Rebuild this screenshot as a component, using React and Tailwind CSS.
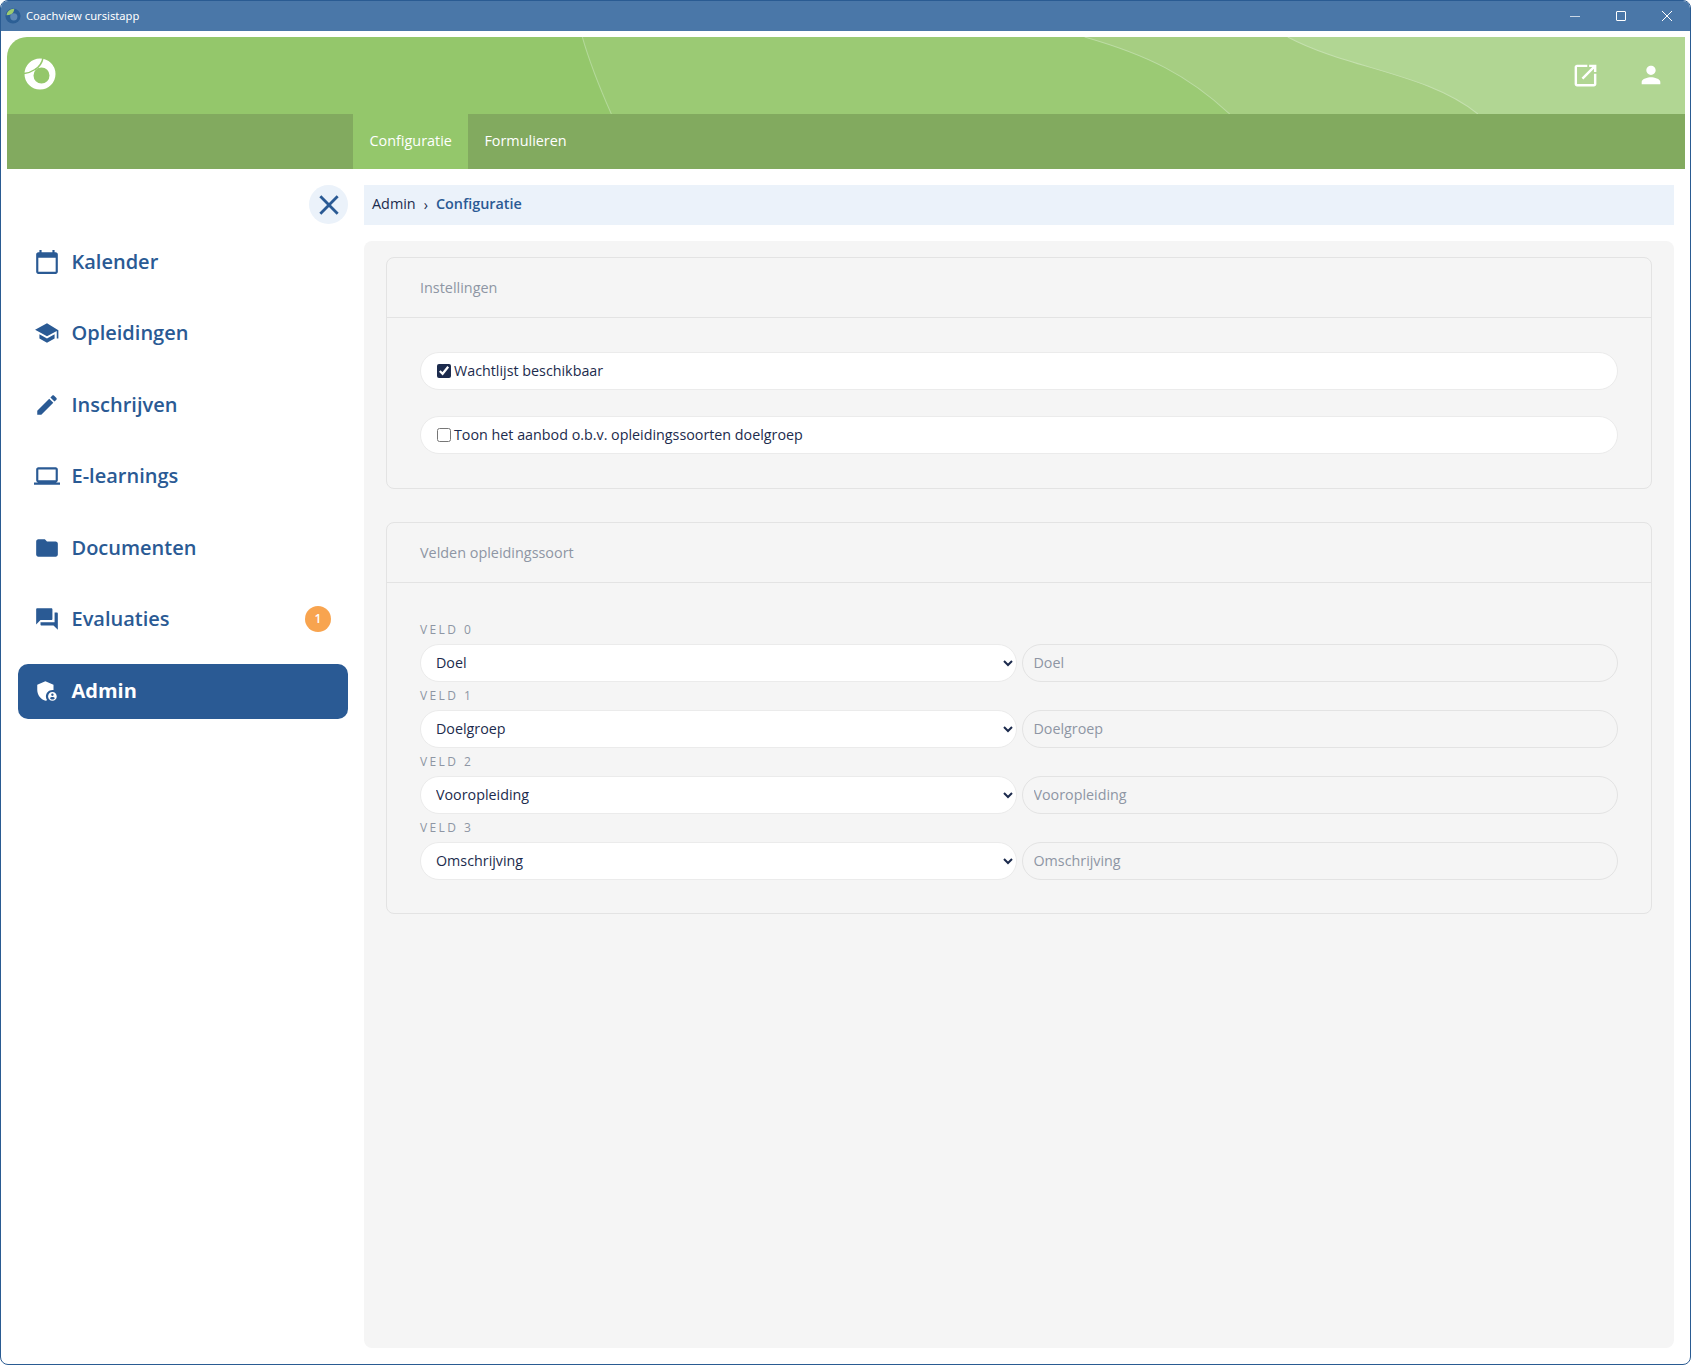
import React from 'react';

const menuItems = [
  { label: 'Kalender', d: 'M20 3h-1V1h-2v2H7V1H5v2H4c-1.1 0-2 .9-2 2v16c0 1.1.9 2 2 2h16c1.1 0 2-.9 2-2V5c0-1.1-.9-2-2-2zm0 18H4V8h16v13z' },
  { label: 'Opleidingen', d: 'M5 13.18v4L12 21l7-3.82v-4L12 17l-7-3.82zM12 3L1 9l11 6 9-4.91V17h1.5V9.5L12 3z' },
  { label: 'Inschrijven', d: 'M3 17.25V21h3.75L17.81 9.94l-3.75-3.75L3 17.25zM20.71 7.04c.39-.39.39-1.02 0-1.41l-2.34-2.34c-.39-.39-1.02-.39-1.41 0l-1.83 1.83 3.75 3.75 1.83-1.83z' },
  { label: 'E-learnings', d: 'M20 18c1.1 0 1.99-.9 1.99-2L22 6c0-1.1-.9-2-2-2H4c-1.1 0-2 .9-2 2v10c0 1.1.9 2 2 2H0v2h24v-2h-4zM4 6h16v10H4V6z' },
  { label: 'Documenten', d: 'M10 4H4c-1.1 0-1.99.9-1.99 2L2 18c0 1.1.9 2 2 2h16c1.1 0 2-.9 2-2V8c0-1.1-.9-2-2-2h-8l-2-2z' },
  { label: 'Evaluaties', badge: '1', d: 'M21 6h-2v9H6v2c0 .55.45 1 1 1h11l4 4V7c0-.55-.45-1-1-1zm-4 6V3c0-.55-.45-1-1-1H3c-.55 0-1 .45-1 1v14l4-4h10c.55 0 1-.45 1-1z' },
];

const velden = [
  { label: 'VELD 0', value: 'Doel' },
  { label: 'VELD 1', value: 'Doelgroep' },
  { label: 'VELD 2', value: 'Vooropleiding' },
  { label: 'VELD 3', value: 'Omschrijving' },
];

const Icon = ({ d, className }) => (
  <svg viewBox="0 0 24 24" className={className} fill="currentColor">
    <path d={d} />
  </svg>
);

const Card = ({ title, children }) => (
  <div className="rounded-lg border border-[#e3e3e3]">
    <div className="flex h-[60px] items-center border-b border-[#e3e3e3] px-[33px] text-[14.400px] text-[#8e96a4]">{title}</div>
    {children}
  </div>
);

const CheckRow = ({ label, checked }) => (
  <label className="flex h-[38px] items-center gap-[3px] rounded-full border border-[#ebebeb] bg-white pl-[16px] text-[14.300px] text-[#1c2b4d]">
    <input type="checkbox" defaultChecked={checked} className="m-0 h-[14px] w-[14px] accent-[#1c2b4d]" />
    <span>{label}</span>
  </label>
);

export default function App() {
  return (
    <div className="flex h-screen w-screen flex-col overflow-hidden rounded-lg border border-[#2a5b92] bg-white font-['Open_Sans',sans-serif]">
      {/* Window title bar */}
      <div className="flex h-[30px] shrink-0 items-center bg-[#4a77a8] pl-[4px] text-white">
        <svg viewBox="0 0 20 20" className="h-[16px] w-[16px]">
          <circle cx="10" cy="10" r="9.500" fill="#2c5f95" />
          <circle cx="11" cy="11" r="4.500" fill="#5d88b5" />
          <path d="M2 9C2 4.500 6 1 11.500 .8c.3 4-3 8-9.500 8.200z" fill="#9ccb70" />
        </svg>
        <span className="ml-[5px] font-['Noto_Sans',sans-serif] text-[11.200px]">Coachview cursistapp</span>
        <div className="ml-auto flex items-center">
          <div className="flex w-[46px] justify-center">
            <div className="h-px w-[10px] bg-[#c9d6e5]" />
          </div>
          <div className="flex w-[46px] justify-center">
            <div className="h-[10px] w-[10px] rounded-[1px] border border-white" />
          </div>
          <div className="flex w-[46px] justify-center">
            <svg viewBox="0 0 12 12" className="h-[12px] w-[12px]" stroke="white" strokeWidth="1">
              <path d="M1 1l10 10M11 1L1 11" />
            </svg>
          </div>
        </div>
      </div>

      <div className="flex min-h-0 flex-1 flex-col pt-[6px] pl-[6px] pr-[5px]">
        {/* Green header */}
        <div className="relative flex h-[77px] shrink-0 items-center overflow-hidden rounded-tl-[20px] bg-[#94c76b] pl-[17px] pr-[20px]">
          <svg viewBox="0 0 1677 77" preserveAspectRatio="none" className="absolute inset-0 h-full w-full" fill="none">
            <path d="M575 0C583 28 592 50 604 77H1677V0Z" fill="#9bca74" />
            <path d="M1077 0C1140 18 1180 38 1222 77H1677V0Z" fill="#a6ce82" />
            <path d="M1280 0C1340 32 1420 36 1470 77H1677V0Z" fill="#b1d693" />
            <path d="M575 0C583 28 592 50 604 77" stroke="#b4d99a" />
            <path d="M1077 0C1140 18 1180 38 1222 77" stroke="#bcdca4" />
            <path d="M1280 0C1340 32 1420 36 1470 77" stroke="#c4e0ae" />
          </svg>
          <svg viewBox="0 0 32 32" className="relative mb-[4px] h-[32px] w-[32px]">
            <path fill="white" fillRule="evenodd" d="M16 .5a15.500 15.500 0 1 0 0 31 15.500 15.500 0 0 0 0-31zM17.500 9.500a8 8 0 1 1 0 16 8 8 0 0 1 0-16z" />
            <path d="M19 0C18 5 15 9 11 11.500C8 13.500 4 15 0 15.500" fill="none" stroke="#94c76b" strokeWidth="1.500" />
          </svg>
          <div className="relative mb-[1px] ml-auto flex items-center gap-[37px] text-white">
            <Icon className="h-[29px] w-[29px]" d="M19 19H5V5h8.500V3H5c-1.110 0-2 .9-2 2v14c0 1.100.89 2 2 2h14c1.100 0 2-.9 2-2v-8.500h-2V19zM15 3v2h2.590l-8.830 8.830 1.410 1.410L19 6.410V9h2V3h-6z" />
            <Icon className="h-[28px] w-[28px]" d="M12 12c2.210 0 4-1.790 4-4s-1.790-4-4-4-4 1.790-4 4 1.790 4 4 4zm0 2c-2.670 0-8 1.340-8 4v2h16v-2c0-2.660-5.330-4-8-4z" />
          </div>
        </div>

        {/* Tabs */}
        <div className="flex h-[55px] shrink-0 bg-[#82aa5f] pl-[346px] pb-[2px] text-[14.400px] text-white">
          <div className="-mb-[2px] flex items-center bg-[#94c76b] px-[16.500px] pb-[2px]">Configuratie</div>
          <div className="flex items-center px-[16px]">Formulieren</div>
        </div>

        <div className="flex min-h-0 flex-1">
          {/* Sidebar */}
          <aside className="flex w-[357px] shrink-0 flex-col pt-[16px] pr-[16px] pl-[11px]">
            <div className="mb-[10px] flex h-[39px] w-[39px] items-center justify-center self-end rounded-full bg-[#ebf2fa] text-[#2a5a94]">
              <svg viewBox="0 0 24 24" className="h-[26px] w-[26px]" fill="none" stroke="currentColor" strokeWidth="2.600">
                <path d="M4 4l16 16M20 4L4 20" />
              </svg>
            </div>
            {menuItems.map((item) => (
              <div key={item.label} className="mb-[16.600px] flex h-[55px] items-center pr-[17px] pl-[16px] text-[20px] font-semibold text-[#2a5a94]">
                <Icon d={item.d} className="h-[26px] w-[26px]" />
                <span className="ml-[11.500px]">{item.label}</span>
                {item.badge && (
                  <span className="ml-auto flex h-[26px] w-[26px] items-center justify-center rounded-full bg-[#f8a44f] text-[12px] font-semibold text-white">
                    {item.badge}
                  </span>
                )}
              </div>
            ))}
            <div className="flex h-[55px] items-center rounded-[10px] bg-[#2a5a94] pb-[1px] pl-[16px] text-[20px] font-bold text-white">
              <svg viewBox="0 0 24 24" className="h-[26px] w-[26px]" fill="currentColor">
                <path d="M17 11c.34 0 .67.04 1 .09V6.270L10.500 3 3 6.270v4.910c0 4.540 3.200 8.790 7.500 9.820.55-.13 1.080-.32 1.600-.55-.69-.98-1.100-2.170-1.100-3.450 0-3.310 2.690-6 6-6z" />
                <path fillRule="evenodd" d="M17 13c-2.210 0-4 1.790-4 4s1.790 4 4 4 4-1.790 4-4-1.790-4-4-4zm0 1.380c.62 0 1.120.51 1.120 1.120s-.51 1.120-1.120 1.120-1.120-.51-1.120-1.120.5-1.120 1.120-1.120zm0 5.370c-.93 0-1.740-.46-2.240-1.170.05-.72 1.510-1.080 2.240-1.080s2.190.36 2.240 1.080c-.5.71-1.310 1.170-2.240 1.170z" />
              </svg>
              <span className="ml-[11.500px]">Admin</span>
            </div>
          </aside>

          {/* Main content */}
          <main className="flex min-w-0 flex-1 flex-col pt-[16px] pr-[11px] pb-[16px]">
            <div className="flex h-[40px] shrink-0 items-center bg-[#ebf2fa] px-[8px] pb-[2px] text-[14.400px] text-[#1c2b4d]">
              <span>Admin</span>
              <span className="mx-[8px] text-[14px]">›</span>
              <span className="font-semibold text-[#2a5a94]">Configuratie</span>
            </div>
            <div className="mt-[16px] flex flex-1 flex-col gap-[33px] rounded-lg bg-[#f5f5f5] px-[22px] pt-[16px]">
              <Card title="Instellingen">
                <div className="flex flex-col gap-[26px] px-[33px] py-[34px]">
                  <CheckRow label="Wachtlijst beschikbaar" checked />
                  <CheckRow label="Toon het aanbod o.b.v. opleidingssoorten doelgroep" />
                </div>
              </Card>
              <Card title="Velden opleidingssoort">
                <div className="px-[33px] pt-[33px] pb-[33px]">
                  {velden.map((veld) => (
                    <div key={veld.label}>
                      <div className="text-[12px] leading-[28px] tracking-[0.2em] text-[#8e96a4]">{veld.label}</div>
                      <div className="grid grid-cols-2 gap-[5px]">
                        <select defaultValue={veld.value} className="h-[38px] rounded-full border border-[#ebebeb] bg-white pb-[1px] pl-[11px] text-[14.300px] text-[#1c2b4d]">
                          <option>{veld.value}</option>
                        </select>
                        <input placeholder={veld.value} className="h-[38px] rounded-full border border-[#e3e3e3] bg-[#f5f5f5] px-[11px] pb-[1px] text-[14.300px] placeholder:text-[#8e96a4]" />
                      </div>
                    </div>
                  ))}
                </div>
              </Card>
            </div>
          </main>
        </div>
      </div>
    </div>
  );
}
